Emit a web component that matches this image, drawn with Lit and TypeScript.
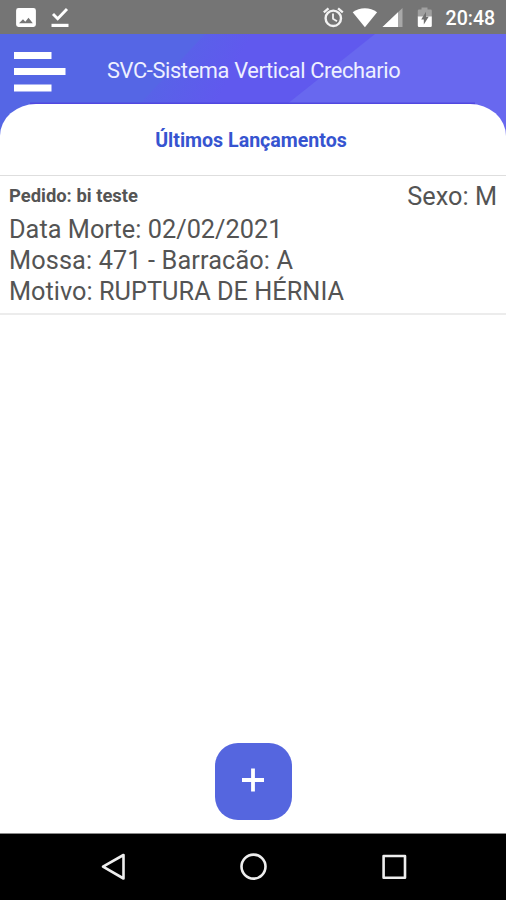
import { LitElement, html, css } from "lit";
import { customElement } from "lit/decorators.js";

@customElement("status-bar")
class StatusBar extends LitElement {
  static styles = css`
    :host { display: flex; height: 34px; background: #757575; color: #fff; position: relative; }
    svg { display: block; width: 440px; height: 34px; flex: none; }
    .time { margin-left: 5.5px; font-size: 19.6px; font-weight: 500; line-height: 37px; letter-spacing: 0; white-space: nowrap; }
  `;
  render() {
    return html`
      <svg viewBox="0 0 440 34" fill="#fff">
        <path fill-rule="evenodd" d="M18.5 8h15a2.4 2.4 0 0 1 2.4 2.4v14.2a2.4 2.4 0 0 1-2.4 2.4h-15a2.4 2.4 0 0 1-2.4-2.4V10.4a2.4 2.4 0 0 1 2.4-2.4zM19 23.2h13.8l-4.3-5.5-3.2 4.1-2.3-2.5z"/>
        <path d="M53 14l4.7 4.7 9.3-9.7" fill="none" stroke="#fff" stroke-width="2.9"/>
        <path d="M51.5 23.8h17v3.2h-17z"/>
        <g fill="none" stroke="#f2f2f2">
          <circle cx="333.3" cy="18.3" r="7.7" stroke-width="2.4"/>
          <path d="M333 13.5v5.3l4 2.4" stroke-width="1.8"/>
          <path d="M323.8 12.4l4.7-4M342.8 12.4l-4.7-4" stroke-width="2.3"/>
        </g>
        <path d="M352.7 12.2c7-5.4 17.4-5.4 24.4 0L364.9 27.3z"/>
        <path d="M402.5 8v19h-20z" fill="#a8a8a8"/>
        <path d="M398 12.3V27h-15.5z"/>
        <path d="M421.5 9.5V7.5h6v2h3a1.3 1.3 0 0 1 1.3 1.3V17h-14v-6.2a1.3 1.3 0 0 1 1.3-1.3z" fill="#a0a0a0"/>
        <path d="M417.8 16.5h14v9.2a1.3 1.3 0 0 1-1.3 1.3h-11.4a1.3 1.3 0 0 1-1.3-1.3z"/>
        <path d="M426 11.8l-4.8 7.7h2.6v5l4.9-7.8H426z" fill="#707070"/>
      </svg>
      <span class="time">20:48</span>`;
  }
}

@customElement("entry-card")
class EntryCard extends LitElement {
  static styles = css`
    :host { display: block; box-sizing: border-box; height: 140px; padding: 5px 9px 0; border-top: 1px solid #dedede; border-bottom: 2px solid #ececec; color: #545454; }
    .top { display: flex; justify-content: space-between; height: 33px; }
    .order { font-size: 18.4px; font-weight: 700; line-height: 30px; white-space: nowrap; }
    .sex, .line { font-size: 25.3px; line-height: 31px; letter-spacing: 0.02px; white-space: nowrap; }
    .spaced { letter-spacing: 0.12px; }
  `;
  render() {
    return html`
      <div class="top"><span class="order">Pedido: bi teste</span><span class="sex">Sexo: M</span></div>
      <div class="line">Data Morte: 02/02/2021</div>
      <div class="line spaced">Mossa: 471 - Barracão: A</div>
      <div class="line">Motivo: RUPTURA DE HÉRNIA</div>`;
  }
}

@customElement("app-root")
class AppRoot extends LitElement {
  static styles = css`
    :host { display: flex; flex-direction: column; width: 506px; height: 900px; overflow: hidden; background: #fff; font-family: Roboto, sans-serif; }
    header { display: flex; flex: none; height: 102px; position: relative; }
    .backdrop { position: absolute; inset: 0; width: 506px; height: 102px; }
    .menu { position: relative; width: 51px; height: 40px; margin: 17px 0 0 14px; overflow: visible; }
    h1 { position: relative; margin: 0 0 0 42px; font-size: 21.8px; letter-spacing: -0.36px; font-weight: 400; line-height: 73px; color: #eef0ff; white-space: nowrap; }
    .sheet { display: flex; flex-direction: column; flex: 1; position: relative; margin-top: -32px; background: #fff; border-radius: 36px 36px 0 0 / 32px 32px 0 0; }
    h2 { margin: 0; height: 71px; padding-right: 4px; font-size: 19.6px; line-height: 73px; font-weight: 700; text-align: center; color: #3654d0; }
    .add { display: flex; align-items: center; justify-content: center; width: 77px; height: 77px; margin: auto auto 13px 214.5px; padding: 0 0 3px; border: 0; border-radius: 23px; background: #5566df; }
    nav { flex: none; height: 67px; background: #000; border-top: 1px solid #8a8a8a; box-sizing: border-box; }
    svg { display: block; }
  `;
  render() {
    return html`
      <status-bar></status-bar>
      <header>
        <svg class="backdrop" viewBox="0 0 506 102">
          <defs>
            <linearGradient id="mid" gradientUnits="userSpaceOnUse" x1="140" y1="30" x2="215" y2="70">
              <stop offset="0" stop-color="#5566e5"/><stop offset="1" stop-color="#6059ee"/>
            </linearGradient>
          </defs>
          <path d="M0 0h506v102H0z" fill="#5566e5"/>
          <path d="M205 0h301v102H110z" fill="url(#mid)"/>
          <path d="M375 0h131v102H247z" fill="#6868ef"/>
          <path d="M30 69.5h445" stroke="#5148e0" stroke-width="2"/>
        </svg>
        <svg class="menu" viewBox="0 0 51 40" fill="#fff">
          <path d="M0 1h37.5v7H0zM0 17h51.5v7H0zM0 33.5h37.5v7H0z"/>
        </svg>
        <h1>SVC-Sistema Vertical Crechario</h1>
      </header>
      <main class="sheet">
        <h2>Últimos Lançamentos</h2>
        <entry-card></entry-card>
        <button class="add" aria-label="+">
          <svg width="24" height="24" viewBox="0 0 24 24"><path d="M12 .5v23M1 12h22" stroke="#fff" stroke-width="3.8" fill="none"/></svg>
        </button>
      </main>
      <nav>
        <svg width="506" height="66" viewBox="0 834 506 66" fill="none" stroke="#eee" stroke-width="2.6" stroke-linejoin="round">
          <path d="M123.5 855v23.5l-20.500-11.800z"/>
          <circle cx="253.500" cy="866.600" r="12"/>
          <path d="M383.600 856h21.400v21.800h-21.400z"/>
        </svg>
      </nav>`;
  }
}
